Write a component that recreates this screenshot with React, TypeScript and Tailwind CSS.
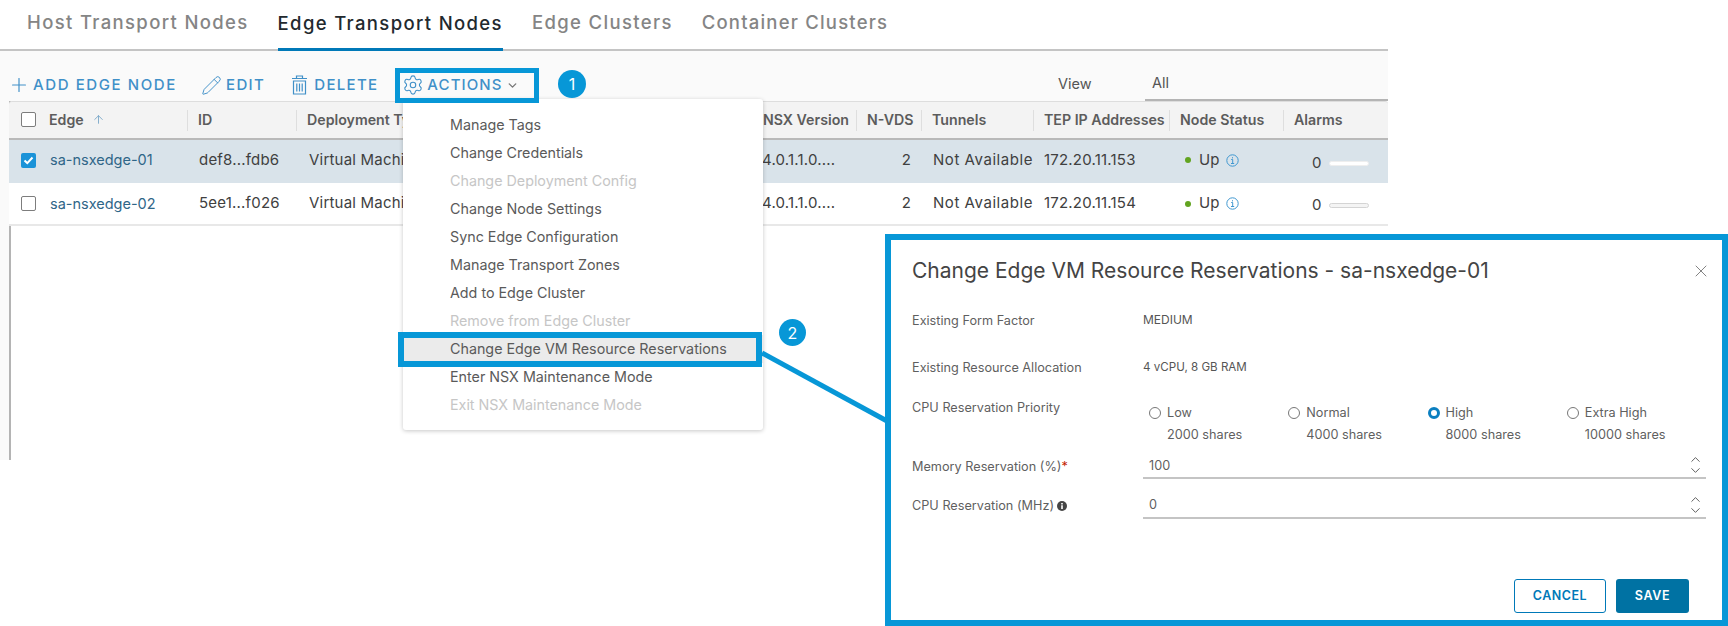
import { ArrowUp, ChevronDown, ChevronUp, Pencil, Plus, Settings, X } from "lucide-react";

const COLS = "grid grid-cols-[178px_109px_456px_104px_65px_112px_136px_114px_105px]";

const headers = ["Edge", "ID", "Deployment Type", "NSX Version", "N-VDS", "Tunnels", "TEP IP Addresses", "Node Status", "Alarms"];

const rows = [
  { name: "sa-nsxedge-01", id: "def8...fdb6", ip: "172.20.11.153", selected: true },
  { name: "sa-nsxedge-02", id: "5ee1...f026", ip: "172.20.11.154", selected: false },
];

const menuItems = [
  { label: "Manage Tags" },
  { label: "Change Credentials" },
  { label: "Change Deployment Config", disabled: true },
  { label: "Change Node Settings" },
  { label: "Sync Edge Configuration" },
  { label: "Manage Transport Zones" },
  { label: "Add to Edge Cluster" },
  { label: "Remove from Edge Cluster", disabled: true },
  { label: "Change Edge VM Resource Reservations", active: true },
  { label: "Enter NSX Maintenance Mode" },
  { label: "Exit NSX Maintenance Mode", disabled: true },
];

const priorities = [
  { label: "Low", shares: "2000 shares" },
  { label: "Normal", shares: "4000 shares" },
  { label: "High", shares: "8000 shares", checked: true },
  { label: "Extra High", shares: "10000 shares" },
];

function TrashIcon() {
  return (
    <svg width="17" height="20" viewBox="0 0 17 20" fill="none" stroke="currentColor" strokeWidth="1.2">
      <path d="M1 3.5h15M5.5 3.5V1h6v2.5M2.5 6h12v13h-12zM5.8 8.5v8M8.5 8.5v8M11.2 8.5v8" />
    </svg>
  );
}

function InfoIcon() {
  return (
    <svg width="13" height="13" viewBox="0 0 13 13" fill="none" stroke="#3f97d0" strokeWidth="1">
      <circle cx="6.5" cy="6.5" r="5.7" />
      <path d="M5.2 5.5h1.5v4M5 9.5h3.2M6.5 3.2v1.2" />
    </svg>
  );
}

function Checkbox({ checked }: { checked?: boolean }) {
  if (checked) {
    return (
      <span className="flex h-[15px] w-[15px] items-center justify-center rounded-[2px] bg-[#1b93d8]">
        <svg width="11" height="9" viewBox="0 0 11 9" fill="none" stroke="white" strokeWidth="2">
          <path d="M1.5 4.5l2.8 2.6 5.2-5.6" />
        </svg>
      </span>
    );
  }
  return <span className="block h-[15px] w-[15px] rounded-[2px] border-[1.5px] border-[#7d7d7d] bg-white" />;
}

function Stepper() {
  return (
    <span className="mt-[-1px] flex flex-col text-[#555555]">
      <ChevronUp size={15} strokeWidth={1.5} className="mb-[-4px]" />
      <ChevronDown size={15} strokeWidth={1.5} />
    </span>
  );
}

function TableSection() {
  return (
    <div className="ml-[9px] flex flex-1 flex-col border-l-2 border-[#b4b4b4] bg-white">
      <div className={`${COLS} ml-[-2px] h-[39px] rounded-t-[3px] border-b-2 border-t border-[#b9b9b9] border-t-[#dddddd] bg-[#f3f3f3] text-[14.2px] font-semibold text-[#5c5c5c]`}>
        {headers.map((h, i) => (
          <div key={h} className={`flex items-center pb-[1px] ${i === 0 ? "pl-[12px]" : "pl-[11px]"} ${i > 0 ? "relative" : ""}`}>
            {i === 0 && <span className="mr-[13px]"><Checkbox /></span>}
            <span className="whitespace-nowrap">{h}</span>
            {i === 0 && <ArrowUp size={13} strokeWidth={1.5} className="ml-[8px] text-[#6d9fc4]" />}
            {i > 0 && <span className="absolute left-0 top-[8px] h-[21px] w-px bg-[#dedede]" />}
          </div>
        ))}
      </div>
      {rows.map((r) => (
        <div
          key={r.name}
          className={`${COLS} ml-[-2px] h-[43px] items-center text-[15px] tracking-[0.2px] text-[#404040] ${r.selected ? "bg-[#d9e3ea] pb-[3px]" : "border-b-2 border-[#e8e8e8] bg-white"}`}
        >
          <div className="flex items-center pl-[12px]">
            <span className="mr-[14px]"><Checkbox checked={r.selected} /></span>
            <span className="text-[14.5px] tracking-normal text-[#2f6688]">{r.name}</span>
          </div>
          <div className="pl-[12px]">{r.id}</div>
          <div className="pl-[13px]">Virtual Machine</div>
          <div className="pl-[10px]">4.0.1.1.0....</div>
          <div className="pr-[10px] text-right">2</div>
          <div className="pl-[12px] whitespace-nowrap tracking-[0.55px]">Not Available</div>
          <div className="pl-[11px]">{r.ip}</div>
          <div className="flex items-center pl-[16px]">
            <span className="h-[6px] w-[6px] rounded-full bg-[#62a420]" />
            <span className="ml-[8px]">Up</span>
            <span className="ml-[6px]"><InfoIcon /></span>
          </div>
          <div className={`flex items-center pl-[29px] ${r.selected ? "pt-[6px]" : "pt-[3px]"}`}>
            <span>0</span>
            <span className={`ml-[7px] h-[5px] w-[40px] rounded-full border border-[#d4d4d4] ${r.selected ? "border-[#eeeeee] bg-white" : "bg-[#f4f4f4]"}`} />
          </div>
        </div>
      ))}
    </div>
  );
}

function ActionsMenu() {
  return (
    <div className="absolute left-[403px] top-[99px] flex h-[331px] w-[360px] flex-col rounded-[3px] bg-white pt-[12px] text-[14.3px] shadow-[0_1px_4px_rgba(0,0,0,0.22)]">
      {menuItems.map((item) => (
        <div
          key={item.label}
          className={`flex h-[28px] shrink-0 items-center pl-[47px] ${item.disabled ? "text-[#c6c6c6]" : "text-[#5a5a5a]"} ${item.active ? "bg-[#ebebeb]" : ""}`}
        >
          {item.label}
        </div>
      ))}
    </div>
  );
}

function ReservationModal() {
  return (
    <div className="absolute left-[885px] top-[234px] flex h-[392px] w-[843px] flex-col border-[6px] border-[#0797d7] bg-white pl-[21px] pr-[16px] text-[12.7px] text-[#5f5f5f]">
      <div className="flex h-[62px] shrink-0 items-center justify-between">
        <h2 className="text-[21px] font-normal text-[#444444]">Change Edge VM Resource Reservations - sa-nsxedge-01</h2>
        <X size={20} strokeWidth={1.1} className="mr-[-5px] text-[#777777]" />
      </div>
      <div className="flex h-[48px] shrink-0 items-start pt-[9px]">
        <span className="w-[231px]">Existing Form Factor</span>
        <span className="text-[12px] text-[#555555]">MEDIUM</span>
      </div>
      <div className="flex h-[40px] shrink-0 items-start pt-[8px]">
        <span className="w-[231px]">Existing Resource Allocation</span>
        <span className="mt-[1px] text-[11.6px] text-[#555555]">4 vCPU, 8 GB RAM</span>
      </div>
      <div className="flex h-[60px] shrink-0 items-start pt-[8px]">
        <span className="w-[231px]">CPU Reservation Priority</span>
        <div className="grid flex-1 grid-cols-4 pl-[6px] pt-[5px]">
          {priorities.map((p) => (
            <div key={p.label} className="flex flex-col">
              <label className="flex items-center gap-[6px]">
                {p.checked ? (
                  <span className="h-[12px] w-[12px] rounded-full border-[3.5px] border-[#0b7fc0] bg-white" />
                ) : (
                  <span className="h-[12px] w-[12px] rounded-full border border-[#777777] bg-white" />
                )}
                {p.label}
              </label>
              <span className="ml-[18px] mt-[3px]">{p.shares}</span>
            </div>
          ))}
        </div>
      </div>
      <div className="flex h-[29px] shrink-0 items-center pt-[4px]">
        <span className="w-[231px]">
          Memory Reservation (%)<span className="text-[#c21d00]">*</span>
        </span>
        <div className="flex h-full flex-1 items-center justify-between border-b-2 border-[#c4c4c4] pl-[6px] pr-[3px]">
          <span>100</span>
          <Stepper />
        </div>
      </div>
      <div className="mt-[11px] flex h-[29px] shrink-0 items-center pt-[3px]">
        <span className="flex w-[231px] items-center gap-[3px]">
          CPU Reservation (MHz)
          <svg width="10" height="10" viewBox="0 0 10 10">
            <circle cx="5" cy="5" r="5" fill="#454545" />
            <path d="M4.2 4.3h1.6v3.8H4.2zM4.2 1.9h1.6v1.5H4.2z" fill="white" />
          </svg>
        </span>
        <div className="flex h-full flex-1 items-center justify-between border-b-2 border-[#c4c4c4] pl-[6px] pr-[3px]">
          <span>0</span>
          <Stepper />
        </div>
      </div>
      <div className="mt-auto mb-[7px] flex justify-end gap-[10px] pr-[17px]">
        <button className="h-[34px] w-[92px] rounded-[3px] border border-[#0079b8] text-[12.5px] font-semibold tracking-[0.5px] text-[#0079b8]">CANCEL</button>
        <button className="h-[34px] w-[73px] rounded-[3px] bg-[#0072a3] text-[12.5px] font-semibold tracking-[0.7px] text-white">SAVE</button>
      </div>
    </div>
  );
}

export default function App() {
  return (
    <div className="relative h-[626px] w-[1728px] overflow-hidden bg-white font-[Inter,sans-serif]">
      <div className="flex h-[460px] w-[1388px] flex-col bg-[#fafafa]">
        {/* tabs */}
        <div className="flex h-[51px] shrink-0 items-stretch gap-[29px] border-b-2 border-[#c4c4c4] bg-white pl-[27px] text-[18.5px] font-medium tracking-[1.35px] text-[#858585]">
          <div className="flex items-center pb-[3px]">Host Transport Nodes</div>
          <div className="mb-[-2px] flex items-center border-b-[3px] border-[#0079b8] pb-[1px] text-[#22292e]">Edge Transport Nodes</div>
          <div className="flex items-center pb-[3px]">Edge Clusters</div>
          <div className="flex items-center pb-[3px] tracking-[1.2px]">Container Clusters</div>
        </div>

        {/* toolbar */}
        <div className="flex h-[50px] shrink-0 items-end pl-[8px] text-[15px] font-medium tracking-[1.6px] text-[#4090c8]">
          <div className="flex h-[36px] flex-1 items-center pt-[4px]">
            <Plus size={22} strokeWidth={1.3} />
            <span className="ml-[3px] mr-[1px]">ADD EDGE NODE</span>
            <Pencil size={21} strokeWidth={1.1} className="ml-[23px]" />
            <span className="ml-[4px] tracking-[1.4px]">EDIT</span>
            <span className="ml-[26px]"><TrashIcon /></span>
            <span className="ml-[6px] tracking-[1.3px]">DELETE</span>
            <Settings size={22} strokeWidth={1.2} className="ml-[24px]" />
            <span className="ml-[3px] tracking-[1.1px]">ACTIONS</span>
            <ChevronDown size={13} strokeWidth={2.5} className="ml-[3px] text-[#777777]" />
          </div>
          <div className="flex h-[36px] w-[330px] text-[14.5px] font-normal tracking-normal text-[#555555]">
            <span className="flex w-[87px] items-center pt-[2px]">View</span>
            <span className="flex flex-1 items-center border-b-2 border-[#b4b4b4] pl-[7px] pt-[2px]">All</span>
          </div>
        </div>

        <TableSection />
      </div>

      <ActionsMenu />

      {/* callouts */}
      <div className="absolute left-[395px] top-[68px] h-[35px] w-[144px] border-[5px] border-[#0797d7]" />
      <div className="absolute left-[398px] top-[332px] h-[35px] w-[364px] border-[6px] border-[#0797d7]" />
      <div className="absolute left-[558px] top-[70px] flex h-[28px] w-[28px] items-center justify-center rounded-full bg-[#0797d7] text-[16px] text-white">1</div>
      <div className="absolute left-[779px] top-[319px] flex h-[27px] w-[27px] items-center justify-center rounded-full bg-[#0797d7] text-[16px] text-white">2</div>
      <svg className="absolute left-[760px] top-[350px]" width="130" height="74" viewBox="0 0 130 74">
        <path d="M2 3 L127 71" stroke="#0797d7" strokeWidth="5" />
      </svg>

      <ReservationModal />
    </div>
  );
}
